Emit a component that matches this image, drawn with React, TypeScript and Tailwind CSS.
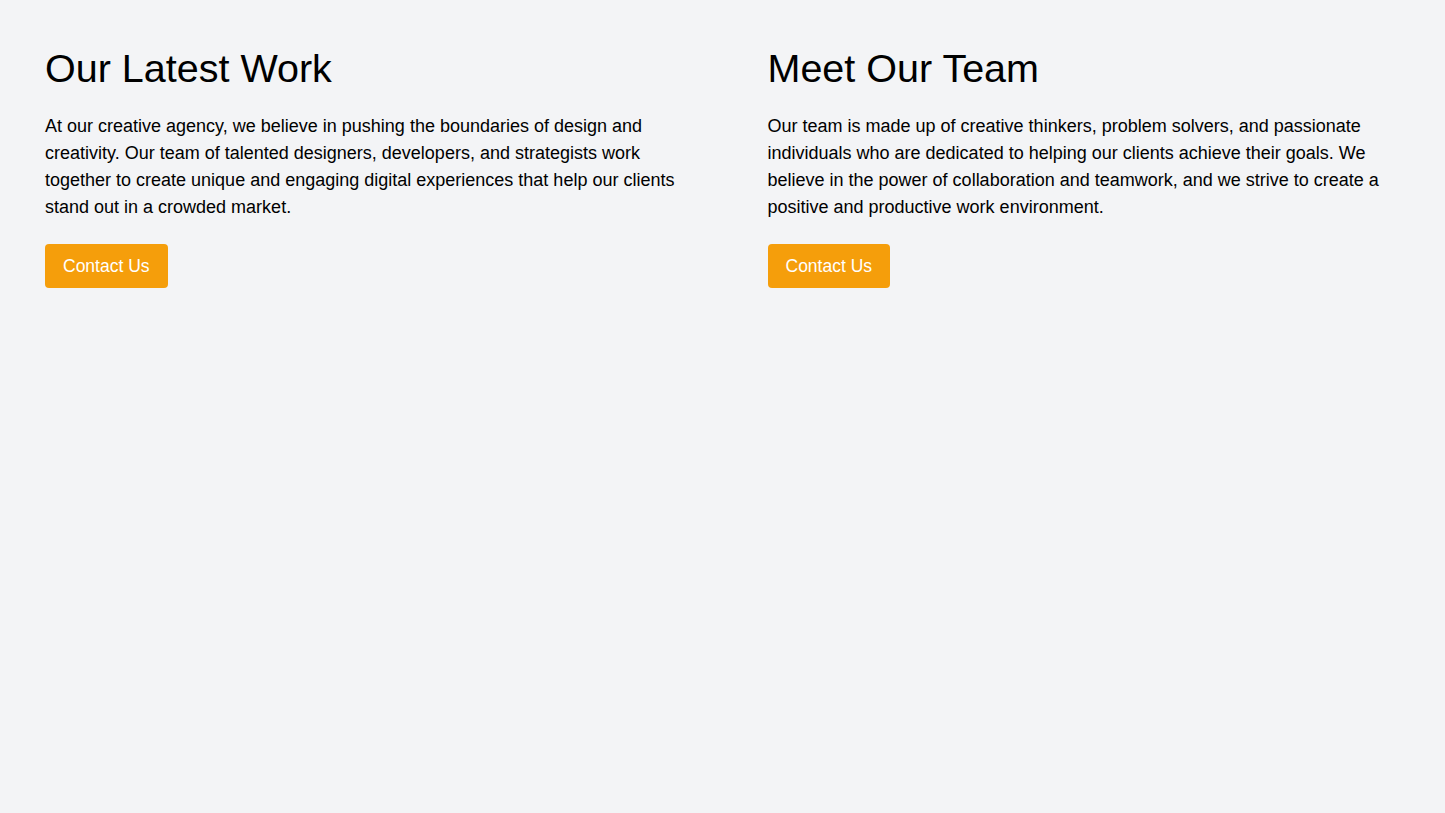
export default function App() {
  const cols = [
    {
      title: "Our Latest Work",
      text: "At our creative agency, we believe in pushing the boundaries of design and creativity. Our team of talented designers, developers, and strategists work together to create unique and engaging digital experiences that help our clients stand out in a crowded market.",
    },
    {
      title: "Meet Our Team",
      text: "Our team is made up of creative thinkers, problem solvers, and passionate individuals who are dedicated to helping our clients achieve their goals. We believe in the power of collaboration and teamwork, and we strive to create a positive and productive work environment.",
    },
  ];
  return (
    <div className="min-h-screen bg-gray-100 text-black font-['Liberation_Sans',Arial,sans-serif]">
      <div className="grid grid-cols-2">
        {cols.map((c) => (
          <div key={c.title} className="px-[45px] pt-[42px]">
            <h2 className="text-[39.5px] leading-[52px] mb-[19px]">{c.title}</h2>
            <p className="text-[18px] leading-[27px] mb-[23px]">{c.text}</p>
            <button className="bg-[#f59e0b] text-white text-[17.5px] rounded px-[18px] h-[44px]">Contact Us</button>
          </div>
        ))}
      </div>
    </div>
  );
}
